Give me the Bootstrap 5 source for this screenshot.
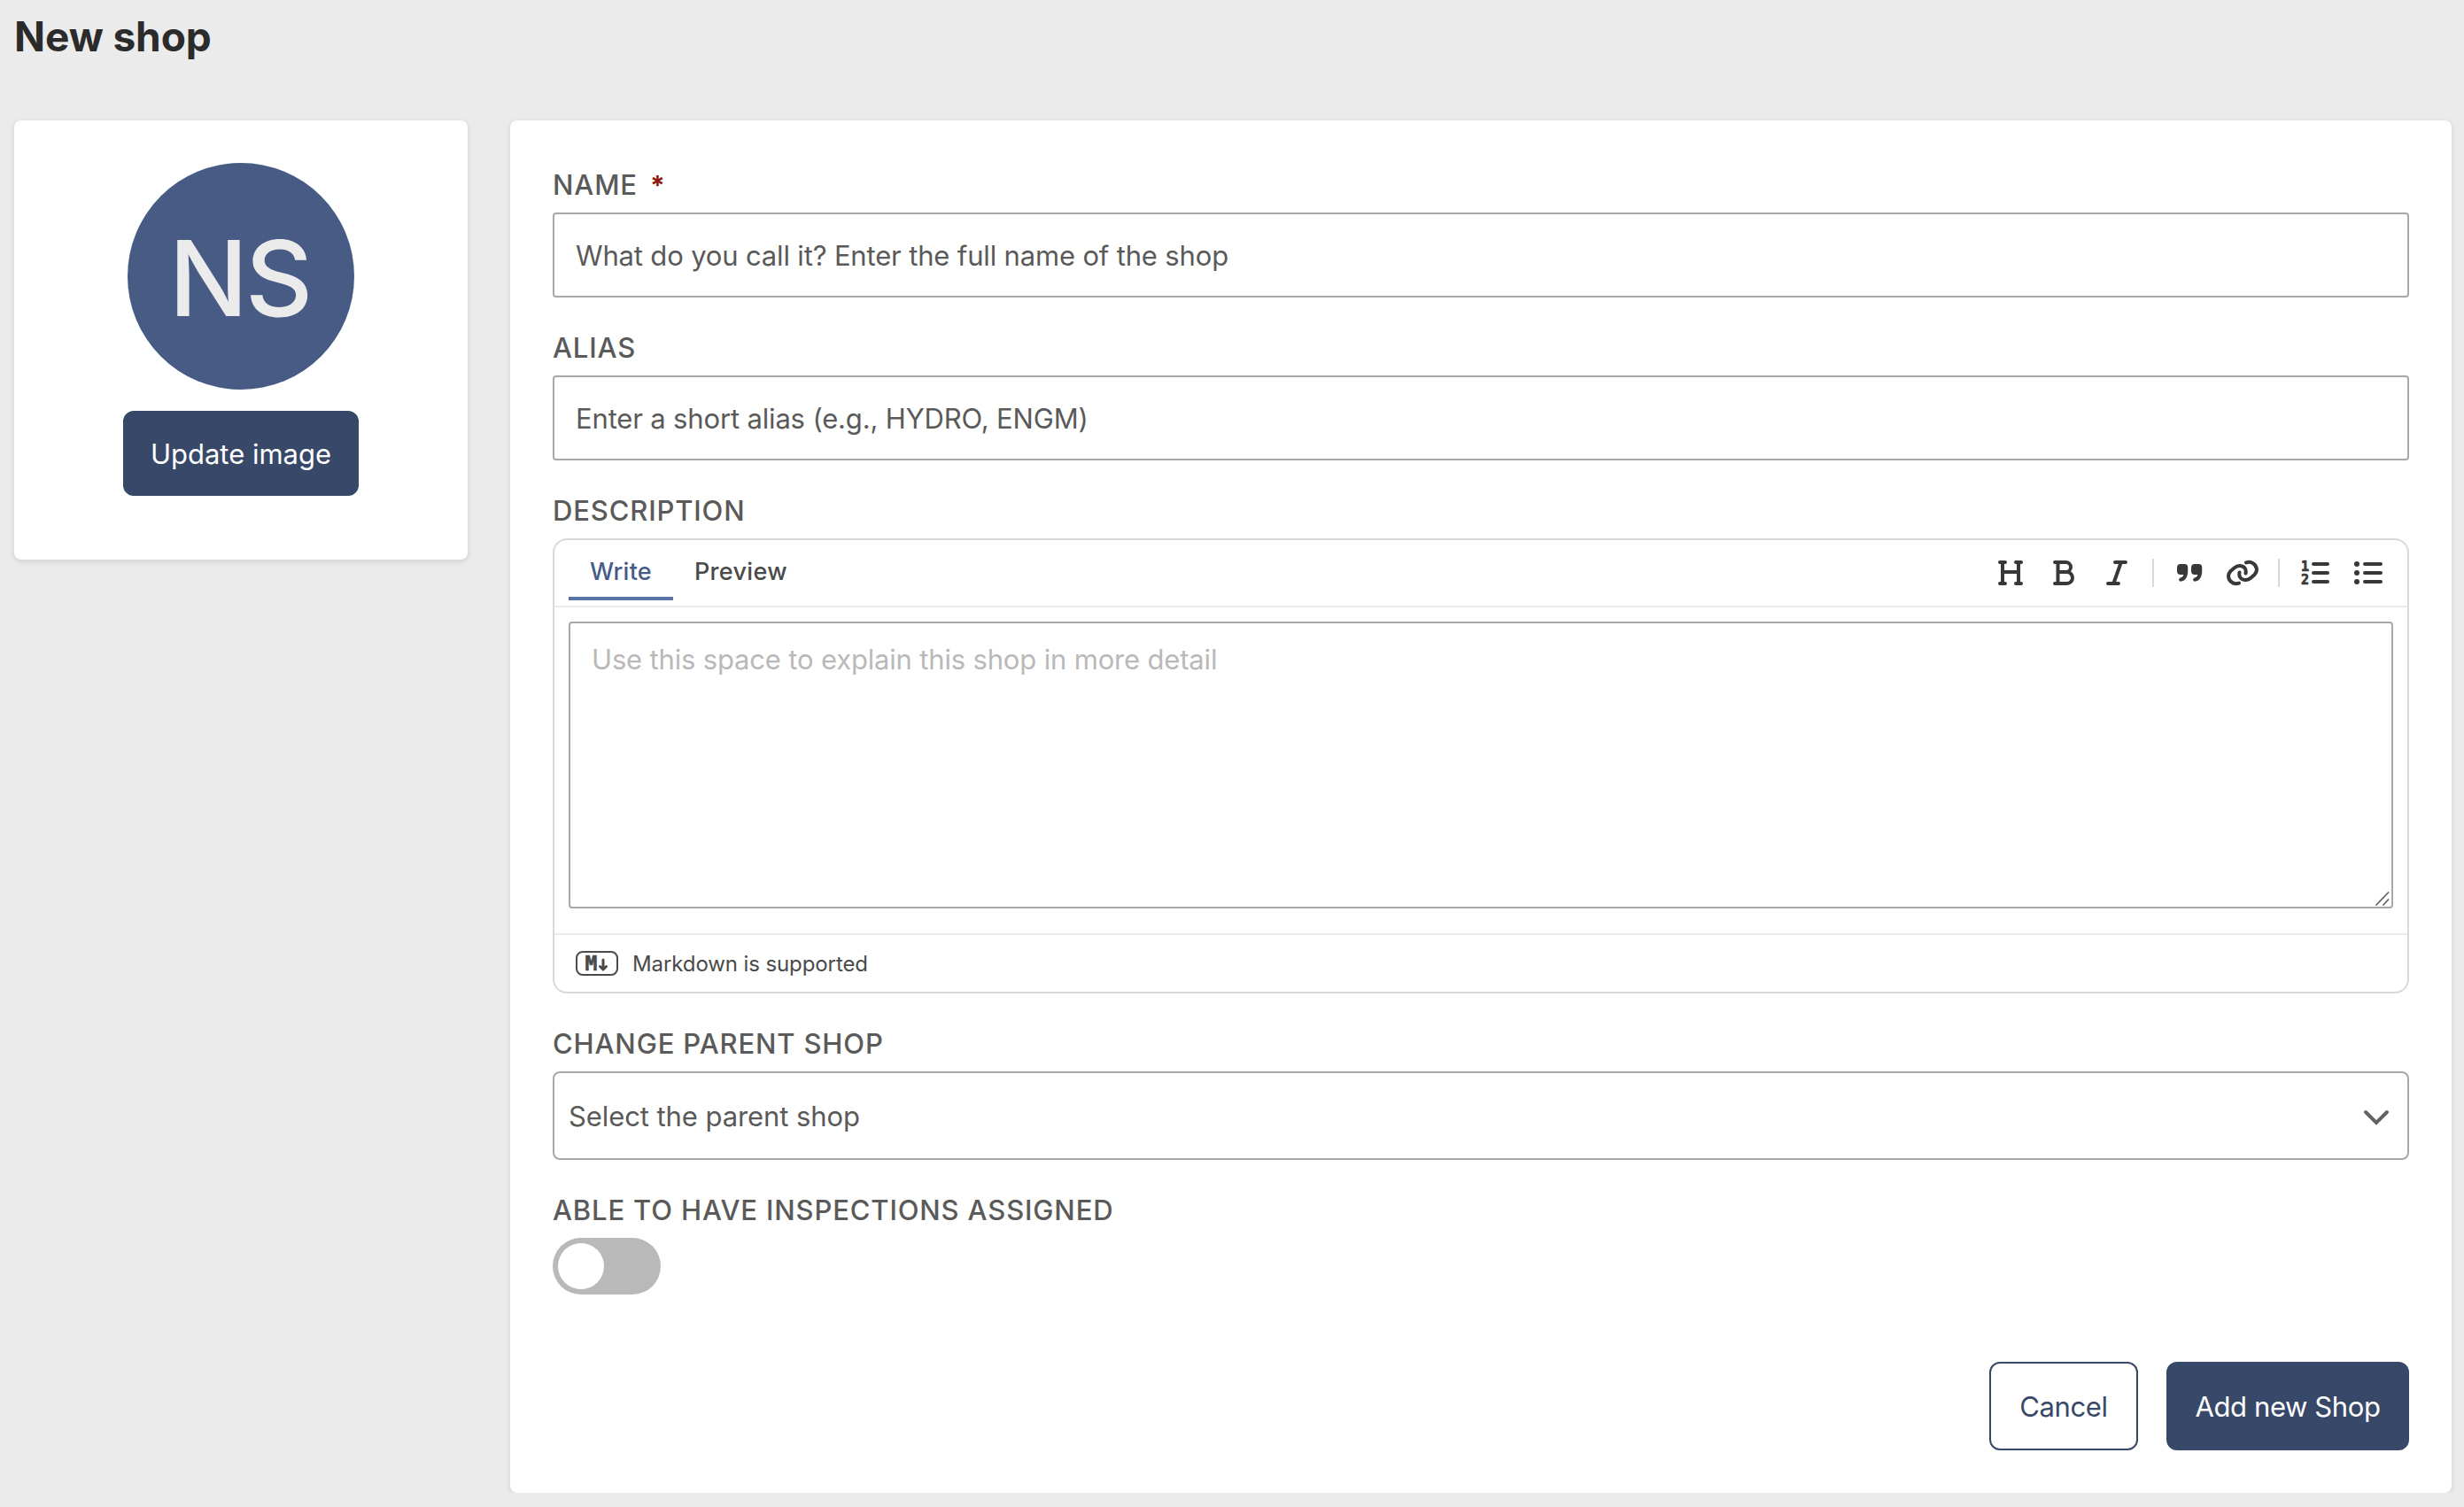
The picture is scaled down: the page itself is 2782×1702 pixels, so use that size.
<!DOCTYPE html>
<html lang="en">
<head>
<meta charset="utf-8">
<title>New shop</title>
<link href="https://cdn.jsdelivr.net/npm/bootstrap@5.3.0/dist/css/bootstrap.min.css" rel="stylesheet">
<style>
  body { background: #ebebeb; font-family: Inter, "Liberation Sans", sans-serif; font-size: 31px; line-height: 48px; color: #5a5a5a; overflow: hidden; }
  .page-head { height: 136px; padding: 13px 0 0 16px; }
  .page-title { font-size: 46px; line-height: 56px; font-weight: 700; color: #2b2b2b; letter-spacing: -.1px; }
  .page-body { padding: 0 14px 0 16px; gap: 48px; }
  .panel { --bs-card-border-width: 0; --bs-card-border-radius: 8px; --bs-card-bg: #fff; box-shadow: 0 2px 6px rgba(0,0,0,.12); }
  .panel-avatar { width: 512px; height: 496px; padding-top: 48px; }
  .avatar { width: 256px; height: 256px; background: #475b85; color: #ebebeb; font-size: 118px; font-weight: 500; letter-spacing: -3px; line-height: 1; padding: 4px 3px 0 0; }
  .btn-shop { --bs-btn-font-size: 31px; --bs-btn-line-height: 48px; --bs-btn-border-radius: 12px; --bs-btn-border-width: 2px; --bs-btn-padding-y: 0; --bs-btn-padding-x: 0; --bs-btn-bg: #384868; --bs-btn-border-color: #384868; --bs-btn-color: #fff; padding-top: 2px; height: 100px; }
  .btn-shop-outline { --bs-btn-bg: #fff; --bs-btn-color: #384868; width: 168px; letter-spacing: -.4px; }
  .btn-update { width: 266px; height: 96px; margin-top: 24px; }
  .btn-add { width: 274px; letter-spacing: -.4px; }
  .panel-form { padding: 48px; height: 1550px; }
  .field + .field { margin-top: 32px; }
  .field-label { display: block; font-weight: 500; line-height: 50px; margin-bottom: 6px; letter-spacing: .85px; }
  .required-mark { color: #8b1a10; font-weight: 700; font-size: 30px; margin-left: 5px; }
  .field-input { height: 96px; padding: 0 24px; border: 2px solid #a8a8a8; border-radius: 4px; font-size: 31px; line-height: 48px; letter-spacing: -.16px; }
  .field-input::placeholder { color: #5a5a5a; opacity: 1; }
  .editor { border: 2px solid #d9d9d9; border-radius: 16px; height: 514px; }
  .editor-head { height: 76px; border-bottom: 2px solid #ebebeb; padding: 0 14px 0 16px; }
  .editor-tab { height: 68px; padding: 6px 0 0; border-bottom: 4px solid transparent; font-size: 27px; font-weight: 500; line-height: 60px; letter-spacing: .3px; color: #4a4a4a; }
  .editor-tab.active { width: 118px; border-color: #5a73a8; color: #475b87; }
  .tab-second { padding-left: 24px; }
  .tool { width: 60px; color: #383838; }
  .tool-sep { width: 2px; height: 32px; margin: 0 10px; background: #d9d9d9; }
  .editor-area { padding: 16px 16px 0; height: 368px; }
  .editor-text { height: 324px; border: 2px solid #a8a8a8; border-radius: 4px; padding: 17px 24px; font-size: 31px; line-height: 48px; letter-spacing: -.17px; resize: none; }
  .editor-text::placeholder { color: #b9b9b9; opacity: 1; }
  .grip { right: 19px; bottom: 29px; }
  .editor-foot { height: 66px; border-top: 2px solid #ebebeb; padding-left: 24px; gap: 16px; font-size: 24px; color: #4a4a4a; letter-spacing: -.1px; }
  .editor-foot span { padding-top: 2px; }
  .parent-select { height: 100px; border: 2px solid #a8a8a8; border-radius: 8px; padding: 1px 19px 0 16px; letter-spacing: -.08px; }
  .switch-track { width: 122px; height: 64px; padding: 6px; background: #b9b9b9; }
  .switch-knob { width: 52px; height: 52px; }
  .actions { margin-top: 76px; gap: 32px; }
</style>
</head>
<body>
<header class="page-head"><h1 class="page-title m-0">New shop</h1></header>
<main class="page-body d-flex align-items-start">
  <aside class="card panel panel-avatar align-items-center flex-shrink-0">
    <div class="avatar rounded-circle d-flex align-items-center justify-content-center">NS</div>
    <button type="button" class="btn btn-shop btn-update">Update image</button>
  </aside>
  <form class="card panel panel-form flex-grow-1">
    <div class="field">
      <label class="field-label" for="name">NAME <span class="required-mark">*</span></label>
      <input id="name" class="form-control field-input" placeholder="What do you call it? Enter the full name of the shop">
    </div>
    <div class="field">
      <label class="field-label" for="alias">ALIAS</label>
      <input id="alias" class="form-control field-input" placeholder="Enter a short alias (e.g., HYDRO, ENGM)">
    </div>
    <div class="field">
      <label class="field-label" for="description">DESCRIPTION</label>
      <div class="editor">
        <div class="editor-head d-flex justify-content-between">
          <div class="d-flex">
            <a class="editor-tab active text-center text-decoration-none">Write</a>
            <a class="editor-tab tab-second text-decoration-none">Preview</a>
          </div>
          <div class="d-flex align-items-center">
            <span class="tool d-flex justify-content-center"><svg width="32" height="32" fill="none" stroke="currentColor" stroke-width="4" stroke-linecap="round"><path d="M4 4h6M22 4h6M4 28h6M22 28h6M7 4v24M25 4v24M7 15h18"/></svg></span>
            <span class="tool d-flex justify-content-center"><svg width="32" height="32" fill="none" stroke="currentColor" stroke-width="4" stroke-linecap="round"><path d="M6 4h12.5a5.5 5.5 0 0 1 0 11H9.5M18.500 15h1a6.500 6.500 0 0 1 0 13H6M9.500 4v24"/></svg></span>
            <span class="tool d-flex justify-content-center"><svg width="32" height="32" fill="none" stroke="currentColor" stroke-width="4" stroke-linecap="round"><path d="M14 4h12M6 28h12M20.800 4l-8.500 24"/></svg></span>
            <span class="tool-sep"></span>
            <span class="tool d-flex justify-content-center"><svg width="32" height="32" fill="currentColor"><path id="q" d="M6 6h4.500a3.700 3.700 0 0 1 3.700 3.700V14c0 6-2.500 10.500-7 11.600-1.800.4-3-.6-3-1.900 0-1 .6-1.800 1.800-2.100 1.800-.5 3-1.700 3.300-3.600H6a4 4 0 0 1-4-4v-4a4 4 0 0 1 4-4z"/><use href="#q" x="16"/></svg></span>
            <span class="tool d-flex justify-content-center"><svg width="36" height="32" fill="none" stroke="currentColor" stroke-width="4" stroke-linecap="round"><path id="l" d="M14 27.600C11 28.600 8 28.400 5.600 26.400 1.200 23 1 17.500 4.500 14l4-3.500C13 6.500 18.500 7.500 20.800 11c1 1.800 1.200 3.500.7 5.500"/><use href="#l" transform="rotate(180 18 16)"/></svg></span>
            <span class="tool-sep"></span>
            <span class="tool d-flex justify-content-center"><svg width="32" height="32" fill="currentColor"><path stroke="currentColor" stroke-width="4" stroke-linecap="round" d="M14 6h16M14 16h16M14 26h16"/><g font-family="DejaVu Sans Mono" font-weight="700" font-size="15" letter-spacing="0" stroke="currentColor" stroke-width=".7"><text x="0" y="14">1</text><text x="0" y="29">2</text></g></svg></span>
            <span class="tool d-flex justify-content-center"><svg width="32" height="32" fill="currentColor"><path stroke="currentColor" stroke-width="4" stroke-linecap="round" d="M12 6h18M12 16h18M12 26h18"/><circle cx="3" cy="6" r="3"/><circle cx="3" cy="16" r="3"/><circle cx="3" cy="26" r="3"/></svg></span>
          </div>
        </div>
        <div class="editor-area position-relative">
          <textarea id="description" class="form-control editor-text" placeholder="Use this space to explain this shop in more detail"></textarea>
          <svg class="grip position-absolute" width="18" height="18" stroke="#666" stroke-width="1.800" stroke-linecap="round"><path d="M2 15 15.500 1M10 15l5.500-6"/></svg>
        </div>
        <div class="editor-foot d-flex align-items-center">
          <svg width="48" height="28" fill="none" stroke="#4a4a4a"><rect x="1" y="1" width="46" height="26" rx="7" stroke-width="2"/><text x="10.500" y="22" font-family="DejaVu Sans Mono" font-weight="700" font-size="23" fill="#4a4a4a" stroke-width=".6">M</text><path d="M31 10v10M27.500 17.500 31 21l3.500-3.500" stroke-width="3" stroke-linecap="round" stroke-linejoin="round"/></svg>
          <span>Markdown is supported</span>
        </div>
      </div>
    </div>
    <div class="field">
      <label class="field-label">CHANGE PARENT SHOP</label>
      <div class="parent-select d-flex align-items-center justify-content-between bg-white">
        <span>Select the parent shop</span>
        <svg width="32" height="22" fill="none" stroke="#626262" stroke-width="4" stroke-linecap="round"><path d="M4 6l12 12L28 6"/></svg>
      </div>
    </div>
    <div class="field">
      <label class="field-label">ABLE TO HAVE INSPECTIONS ASSIGNED</label>
      <div class="switch-track rounded-pill" role="switch" aria-checked="false"><div class="switch-knob rounded-circle bg-white"></div></div>
    </div>
    <div class="actions d-flex justify-content-end">
      <button type="button" class="btn btn-shop btn-shop-outline">Cancel</button>
      <button type="button" class="btn btn-shop btn-add">Add new Shop</button>
    </div>
  </form>
</main>
<script src="https://cdn.jsdelivr.net/npm/bootstrap@5.3.0/dist/js/bootstrap.bundle.min.js"></script>
</body>
</html>
